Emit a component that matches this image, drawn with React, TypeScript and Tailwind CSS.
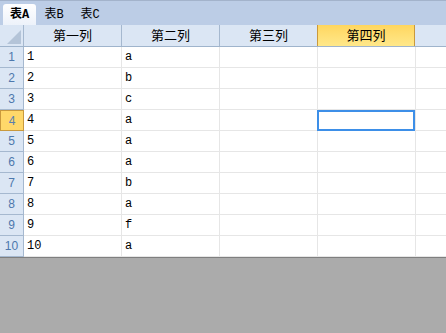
import React from 'react';

const columns = ['第一列', '第二列', '第三列', '第四列', ''];
const rows = [
  ['1', 'a'],
  ['2', 'b'],
  ['3', 'c'],
  ['4', 'a'],
  ['5', 'a'],
  ['6', 'a'],
  ['7', 'b'],
  ['8', 'a'],
  ['9', 'f'],
  ['10', 'a'],
];
const tabs = ['表A', '表B', '表C'];

const SELECTED_ROW = 3;
const SELECTED_COL = 3;

const mono = '"Liberation Mono", "Noto Sans CJK SC", monospace';

const App: React.FC = () => {
  return (
    <div
      className="w-[446px] h-[333px] flex flex-col bg-[#ababab] overflow-hidden"
      style={{ fontFamily: '"Liberation Sans", "Noto Sans CJK SC", sans-serif' }}
    >
      {/* Sheet tabs */}
      <div
        className="h-[25px] flex items-end pl-[3px] bg-[#bccde6] border-t border-[#a3b3cb]"
        style={{ fontFamily: mono }}
      >
        {tabs.map((tab, i) => (
          <div
            key={tab}
            className={
              i === 0
                ? 'h-[21px] w-[33px] flex items-center justify-center rounded-t-[3px] bg-gradient-to-b from-white to-[#edf2fa] text-[12px] font-bold text-black'
                : 'h-[21px] w-[36px] flex items-center justify-center text-[12px] text-black'
            }
          >
            {tab}
          </div>
        ))}
      </div>

      <div className="bg-white">
        {/* Column header */}
        <div className="flex h-[22px] border-b border-[#9fb4cc]">
          <div className="w-[24px] shrink-0 bg-[#dbe6f4] border-r border-[#a5b8cf] flex items-end justify-end p-[2px]">
            <svg width="14" height="14" viewBox="0 0 14 14">
              <polygon points="14,0 14,14 0,14" fill="#b4c4d8" />
            </svg>
          </div>
          {columns.map((c, i) => (
            <div
              key={i}
              className={
                i === SELECTED_COL
                  ? 'w-[98px] shrink-0 flex items-center justify-center text-[13px] text-black bg-gradient-to-b from-[#ffd65e] to-[#ffe88a] border-x border-[#c9993d] -ml-px'
                  : i === columns.length - 1
                  ? 'flex-1 bg-[#dbe6f4]'
                  : 'w-[98px] shrink-0 flex items-center justify-center text-[13px] text-black bg-[#dbe6f4] border-r border-[#a5b8cf]'
              }
            >
              {c}
            </div>
          ))}
        </div>

        {/* Rows */}
        {rows.map((r, ri) => (
          <div key={ri} className="flex h-[21px]">
            <div
              className={
                ri === SELECTED_ROW
                  ? 'w-[24px] shrink-0 flex items-center justify-center text-[12px] text-[#5a7fb0] bg-[#ffd86a] border border-[#c9993d]'
                  : 'w-[24px] shrink-0 flex items-center justify-center text-[12px] text-[#4d78ad] bg-[#dbe6f4] border-r border-b border-[#a5b8cf]'
              }
            >
              {ri + 1}
            </div>
            {columns.map((_, ci) => (
              <div
                key={ci}
                className={
                  (ci === columns.length - 1 ? 'flex-1' : 'w-[98px] shrink-0 border-r') +
                  ' relative border-b border-[#e6e6e6] flex items-center pl-[3px] text-[12px] text-black'
                }
                style={{ fontFamily: mono }}
              >
                {r[ci] ?? ''}
                {ri === SELECTED_ROW && ci === SELECTED_COL && (
                  <div className="absolute -left-px top-0 w-[98px] h-[21px] border-2 border-[#3d8fe8]" />
                )}
              </div>
            ))}
          </div>
        ))}
      </div>

      <div className="h-px bg-[#7f7f7f]" />
    </div>
  );
};

export default App;
